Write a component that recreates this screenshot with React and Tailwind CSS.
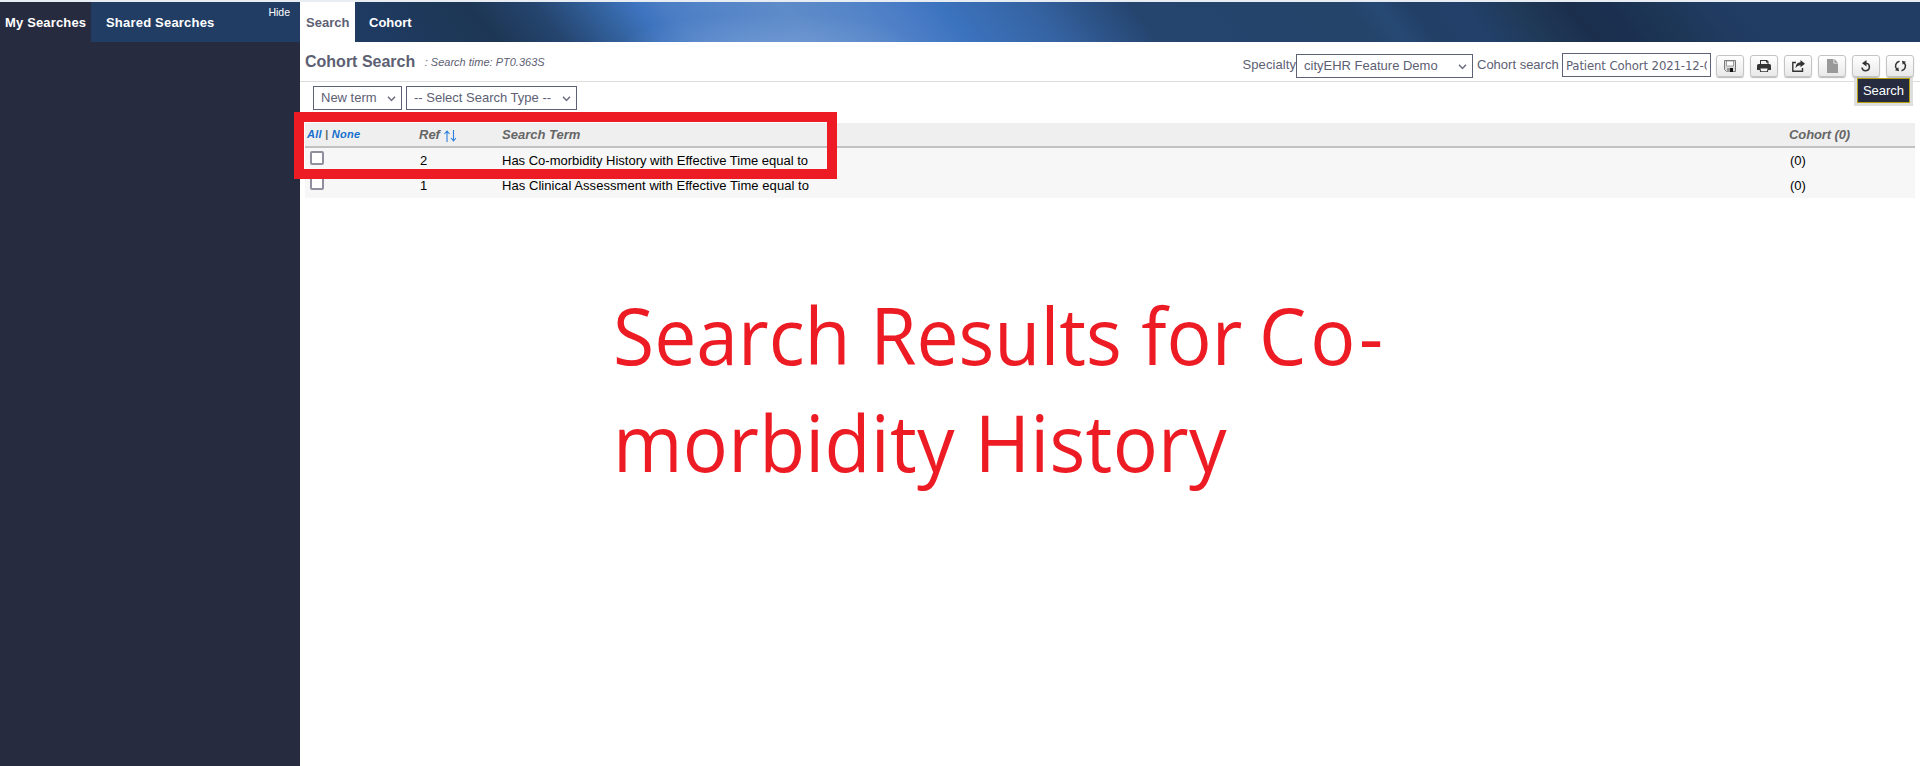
import React from "react";

const terms = [
  { ref: "2", term: "Has Co-morbidity History with Effective Time equal to", cohort: "(0)", spacing: "tracking-normal" },
  { ref: "1", term: "Has Clinical Assessment with Effective Time equal to", cohort: "(0)", spacing: "tracking-[0.06px]" },
];

function Chevron() {
  return (
    <svg width="9" height="6" viewBox="0 0 9 6" className="mt-px shrink-0">
      <path d="M1 .8l3.500 3.700L8 .8" fill="none" stroke="#6b6d80" strokeWidth="1.500" />
    </svg>
  );
}

function Select({ children, className }) {
  return (
    <div className={`flex items-center justify-between border border-[#5f6175] bg-white pl-[7px] pr-[5px] text-[#5d6073] ${className}`}>
      <span>{children}</span>
      <Chevron />
    </div>
  );
}

function ToolButton({ children }) {
  return (
    <button className="flex h-[22px] w-7 items-center justify-center rounded-[3px] border border-[#c4c4c4] bg-linear-to-b from-white to-[#e9e9e9] shadow-[0_1px_1px_#bbb]">
      {children}
    </button>
  );
}

const icons = [
  <svg key="save" width="12" height="12" viewBox="0 0 12 12">
    <path d="M.5.5h11v11h-9l-2-2z" fill="#ddd" stroke="#777" />
    <path d="M2.500 1h7v5h-7z" fill="#fff" stroke="#888" strokeWidth=".8" />
    <path d="M3 8h3v4H3z" fill="#999" />
    <path d="M6 8h3v4H6z" fill="#111" />
  </svg>,
  <svg key="print" width="14" height="12" viewBox="0 0 14 12">
    <path d="M3 0h7l1.500 1.500V4H3z" fill="#333" />
    <path d="M4 1h5v1.500h1.500V4H4z" fill="#eee" />
    <path d="M1.500 4h11Q14 4 14 5.500V10H0V5.500Q0 4 1.500 4z" fill="#333" />
    <path d="M2.500 8h9l-.5 4H3z" fill="#333" />
    <path d="M3.500 8.500h7l-.5 2.700H4z" fill="#f2f2f2" />
  </svg>,
  <svg key="share" width="13" height="12" viewBox="0 0 13 12">
    <path d="M4 2.500H.8v8.700h9.700V8" fill="none" stroke="#333" strokeWidth="1.400" />
    <path d="M8.500 0L13 3.700 8.500 7.200V5.200Q5.500 5 3.500 8 3.700 2.500 8.500 2.200z" fill="#333" />
  </svg>,
  <svg key="file" width="11" height="14" viewBox="0 0 11 14">
    <path d="M0 0h6.500v4.500H11V14H0z" fill="#999" />
    <path d="M7.300 0L11 3.700H7.300z" fill="#999" />
  </svg>,
  <svg key="undo" width="10" height="12" viewBox="0 0 10 12">
    <path d="M4 3.300h1a3.700 3.700 0 1 1-4 4.200" fill="none" stroke="#333" strokeWidth="1.600" />
    <path d="M1 3.200L5.500 0v6.400z" fill="#333" />
  </svg>,
  <svg key="refresh" width="13" height="12" viewBox="0 0 13 12">
    <path d="M5.500 1.200A4.900 4.900 0 0 0 2.800 9.300M7.500 10.800A4.900 4.900 0 0 0 10.200 2.700" fill="none" stroke="#333" strokeWidth="1.500" />
    <path d="M1 10.200L5 11.200 4.300 7.200zM12 1.800L8 .8l.7 4z" fill="#333" />
  </svg>,
];

export default function App() {
  return (
    <div className="relative flex h-[766px] w-[1920px] flex-col overflow-hidden bg-white font-['Liberation_Sans',sans-serif] text-[13px] leading-[16px]">
      <div className="h-[2px] shrink-0 bg-[#e8edf3]" />
      <div className="flex min-h-0 flex-1">
        <aside className="flex w-[300px] shrink-0 flex-col bg-[#262b3f]">
          <div className="flex h-10 bg-[#213d64] font-bold text-white">
            <div className="w-[91px] whitespace-nowrap bg-[#262b3f] pl-[5px] pt-[13px] tracking-[0.16px]">My Searches</div>
            <div className="pl-[15px] pt-[13px] tracking-[0.2px]">Shared Searches</div>
            <div className="ml-auto pr-[10px] pt-[2px] text-[10.5px] font-normal">Hide</div>
          </div>
        </aside>

        <main className="flex min-w-0 flex-1 flex-col">
          <nav className="flex h-10 shrink-0 bg-[radial-gradient(150px_32px_at_470px_44px,#7ba2d899,#7ba2d800),linear-gradient(52deg,#213d64_0%,#1f3a60_6%,#1d3654_12%,#25456f_16%,#3464a2_20%,#3d73be_22%,#4c7ec5_24%,#5585c8_27%,#5e8bc9_31%,#5585c8_35%,#4a7cc6_38%,#3c73be_40.500%,#3563a2_46%,#25456f_52%,#24446c_58%,#244469_65%,#264974_67%,#223f66_69%,#22406a_72%,#1f3957_75.500%,#1b2f4d_78.500%,#1b3050_81%,#1c3553_83%,#203a60_86.500%,#213d64_89%)] font-bold">
            <div className="w-[55px] bg-white pl-[6px] pt-[13px] text-[#5d6073]">Search</div>
            <div className="pl-[14px] pt-[13px] text-white">Cohort</div>
          </nav>

          <header className="flex h-[40px] shrink-0 border-b border-[#dcdcdc] text-[#5d6073]">
            <h1 className="pl-[5px] pt-[10px] text-[16px] font-bold leading-[20px]">Cohort Search</h1>
            <span className="pl-[9.500px] pt-[12px] text-[11px] italic">: Search time: PT0.363S</span>
            <div className="ml-auto flex items-start pr-[6px]">
              <span className="pt-[15px] tracking-[0.08px]">Specialty</span>
              <Select className="mt-3 h-6 w-[177px]">cityEHR Feature Demo</Select>
              <span className="w-[84px] whitespace-nowrap pl-[4px] pt-[15px]">Cohort search</span>
              <div className="ml-[5px] mt-[11px] h-6 w-[149px] border border-[#5f6175] px-[3px] pt-[4px] font-['DejaVu_Sans_Condensed','DejaVu_Sans',sans-serif] text-[13px] tracking-[-0.12px]">
                <div className="overflow-hidden whitespace-nowrap">Patient Cohort 2021-12-0</div>
              </div>
              <div className="ml-[5px] mt-[13px] flex gap-[6px]">
                {icons.map((icon, i) => (
                  <ToolButton key={i}>{icon}</ToolButton>
                ))}
              </div>
            </div>
          </header>

          <div className="flex h-[41px] shrink-0 gap-[4px] pl-[13px] pt-[4px]">
            <Select className="h-6 w-[89px]">New term</Select>
            <Select className="h-6 w-[171px]">-- Select Search Type --</Select>
          </div>

          <section className="ml-[5px] mr-[5px]">
            <div className="flex h-[25px] border-b-2 border-[#c1c1c1] bg-[#efefef] font-bold italic text-[#666]">
              <div className="w-[114px] pl-[2px] pt-[3px] text-[11px] tracking-[0.25px]">
                <span className="text-[#1570cd]">All</span> | <span className="text-[#1570cd]">None</span>
              </div>
              <div className="flex w-[83px] gap-[4px] pt-[4px]">
                Ref
                <svg width="12" height="12" viewBox="0 0 12 12" className="mt-[3px]">
                  <path d="M3 12V1M.5 4L3 1l2.500 3M9.500 0v11M7 8l2.500 3L12 8" fill="none" stroke="#2a7fdc" strokeWidth="1.100" />
                </svg>
              </div>
              <div className="flex-1 pt-[4px]">Search Term</div>
              <div className="w-[126px] pt-[4px] tracking-[-0.1px]">Cohort (0)</div>
            </div>
            {terms.map((t) => (
              <div key={t.ref} className="flex h-[25px] bg-[#f7f7f7] text-black">
                <div className="w-[114px] pl-[5px] pt-[3px]">
                  <div className="h-[14px] w-[14px] rounded-[2px] border-2 border-[#8f8f9d] bg-white" />
                </div>
                <div className="w-[83px] pl-px pt-[5px]">{t.ref}</div>
                <div className={`flex-1 pt-[5px] ${t.spacing}`}>{t.term}</div>
                <div className="w-[125px] pt-[5px]">{t.cohort}</div>
              </div>
            ))}
          </section>
        </main>
      </div>

      <div className="absolute left-[1854px] top-[78px] border-[3px] border-t-0 border-[#dedede]">
        <div className="flex h-[25px] w-[53px] items-center justify-center border border-[#b5a010] bg-[#262b3f] text-white">Search</div>
      </div>
      <div className="absolute left-[294px] top-[112px] h-[67px] w-[543px] border-10 border-[#ed1c24]" />
      <div className="absolute left-[613px] top-[281px] origin-left scale-x-95 whitespace-nowrap font-['Open_Sans','Noto_Sans',sans-serif] text-[79px] leading-[107px] text-[#ed1c24]">
        <p>
          Search Results for <span className="-ml-[3px] tracking-[4px]">Co</span>-
        </p>
        <p className="tracking-[0.3px]">morbidity History</p>
      </div>
    </div>
  );
}
